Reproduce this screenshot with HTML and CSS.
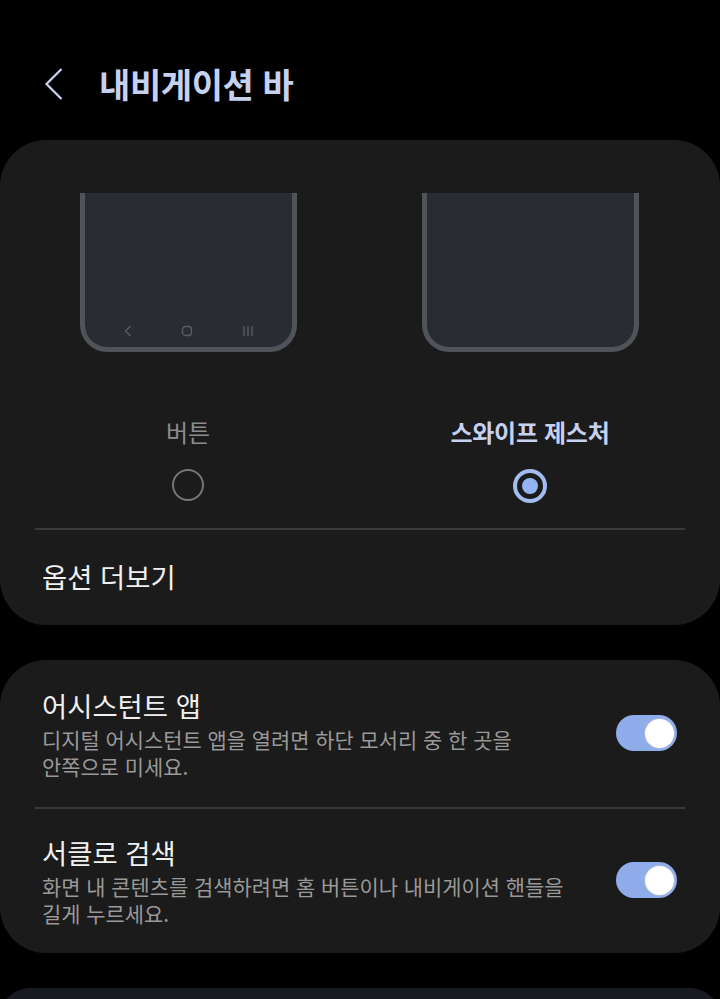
FILE: index.html
```html
<!DOCTYPE html>
<html lang="ko">
<head>
<meta charset="utf-8">
<title>내비게이션 바</title>
<link rel="stylesheet" href="styles.css">
</head>

<body>
<header class="top-bar">
  <svg class="back-icon" width="20" height="34" viewBox="0 0 20 34">
    <path d="M17.5 2 L2.5 17 L17.5 32" fill="none" stroke="#c9d3ef" stroke-width="2.2"/>
  </svg>
  <h1 class="page-title">내비게이션 바</h1>
</header>

<section class="card card-nav">
  <div class="nav-options">
    <div class="nav-option">
      <div class="preview">
        <div class="preview-keys">
          <svg width="10" height="12" viewBox="0 0 10 12"><path d="M7.5 1 L2.5 6 L7.5 11" fill="none" stroke="#5b5e63" stroke-width="1.3"/></svg>
          <svg width="12" height="12" viewBox="0 0 12 12"><rect x="1.5" y="1.5" width="9" height="9" rx="3" fill="none" stroke="#5b5e63" stroke-width="1.3"/></svg>
          <svg width="12" height="12" viewBox="0 0 12 12"><path d="M2 1 V11 M6 1 V11 M10 1 V11" fill="none" stroke="#5b5e63" stroke-width="1.3"/></svg>
        </div>
      </div>
      <div class="option-label">버튼</div>
      <div class="radio"></div>
    </div>
    <div class="nav-option">
      <div class="preview"></div>
      <div class="option-label option-label-on">스와이프 제스처</div>
      <div class="radio radio-on"></div>
    </div>
  </div>
  <div class="divider"></div>
  <div class="more-row">옵션 더보기</div>
</section>

<section class="card card-toggles">
  <div class="toggle-row">
    <div class="toggle-text">
      <div class="row-title">어시스턴트 앱</div>
      <div class="row-desc">디지털 어시스턴트 앱을 열려면 하단 모서리 중 한 곳을<br>안쪽으로 미세요.</div>
    </div>
    <div class="toggle"><div class="knob"></div></div>
  </div>
  <div class="divider"></div>
  <div class="toggle-row toggle-row-second">
    <div class="toggle-text">
      <div class="row-title">서클로 검색</div>
      <div class="row-desc">화면 내 콘텐츠를 검색하려면 홈 버튼이나 내비게이션 핸들을<br>길게 누르세요.</div>
    </div>
    <div class="toggle"><div class="knob"></div></div>
  </div>
</section>

<section class="card card-last"></section>
</body>
</html>
```

FILE: styles.css
```css
html, body {
height: 999px;
overflow: hidden;
}
body {
margin: 0;
background: #000;
font-family: "Noto Sans CJK KR", "Noto Sans", sans-serif;
color: #f0f0f0;
}
.top-bar {
height: 140px;
display: flex;
align-items: center;
padding: 28px 0 0 44px;
box-sizing: border-box;
}
.back-icon {
margin-right: 35px;
}
.page-title {
margin: 0;
font-size: 34px;
font-weight: 700;
letter-spacing: -0.4px;
line-height: 44px;
color: #c6d1f0;
}
.card {
background: #1b1b1b;
border-radius: 46px;
}
.card-nav {
height: 485px;
padding-top: 53px;
box-sizing: border-box;
}
.nav-options {
display: grid;
grid-template-columns: 342px 342px;
padding: 0 17px;
}
.nav-option {
display: flex;
flex-direction: column;
align-items: center;
height: 335px;
}
.preview {
width: 217px;
height: 159px;
box-sizing: border-box;
border: 5.5px solid #505359;
border-top: 0;
border-radius: 0 0 27px 27px;
background: #292c31;
display: flex;
align-items: flex-end;
}
.preview-keys {
width: 100%;
display: flex;
justify-content: space-between;
padding: 0 38px 10px 38px;
box-sizing: border-box;
}
.option-label {
margin-top: 61px;
height: 38px;
line-height: 38px;
font-size: 24px;
color: #8c8c8c;
}
.option-label-on {
font-weight: 700;
letter-spacing: -0.3px;
color: #c6d1f0;
}
.radio {
margin-top: 18px;
width: 28px;
height: 28px;
border: 2.5px solid #777;
border-radius: 50%;
}
.radio-on {
position: relative;
border: 4px solid #a3bcee;
width: 26px;
height: 26px;
}
.radio-on::after {
content: "";
position: absolute;
left: 5px;
top: 5px;
width: 16px;
height: 16px;
border-radius: 50%;
background: #94b4f2;
}
.divider {
height: 2px;
margin: 0 35px;
background: #3a3a3a;
}
.more-row {
height: 95px;
line-height: 93px;
padding-left: 42px;
font-size: 27.4px;
font-weight: 400;
}
.card-toggles {
margin-top: 35px;
height: 293px;
}
.toggle-row {
height: 147px;
box-sizing: border-box;
padding: 25px 43px 0 42px;
display: flex;
justify-content: space-between;
}
.toggle-row-second {
padding-top: 23px;
}
.row-title {
font-size: 27.4px;
font-weight: 400;
line-height: 40px;
}
.row-desc {
margin-top: 1px;
font-size: 20.9px;
line-height: 27px;
color: #999;
}
.toggle {
margin-top: 30px;
width: 61px;
height: 36px;
border-radius: 18px;
background: #8fadeb;
display: flex;
justify-content: flex-end;
align-items: center;
padding-right: 3px;
box-sizing: border-box;
}
.knob {
width: 29px;
height: 29px;
border-radius: 50%;
background: #fff;
box-shadow: 0 0 0 1px #a9b7d8;
}
.card-last {
margin-top: 35px;
height: 60px;
background: #171a20;
}
```
